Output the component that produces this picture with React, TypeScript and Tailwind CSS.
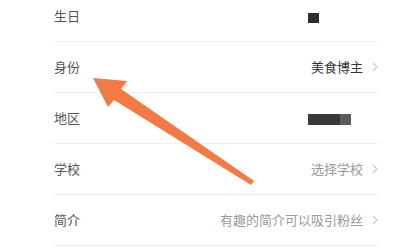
const rows = [
  { label: "生日", kind: "square" },
  { label: "身份", value: "美食博主", tone: "dark" },
  { label: "地区", kind: "bar" },
  { label: "学校", value: "选择学校", tone: "muted" },
  { label: "简介", value: "有趣的简介可以吸引粉丝", tone: "muted" },
];

function Chevron() {
  return (
    <svg width="6" height="10" viewBox="0 0 6 10" className="ml-[9px]">
      <path d="M1 1l4 4-4 4" fill="none" stroke="#c8c8c8" strokeWidth="1.1" />
    </svg>
  );
}

export default function App() {
  return (
    <div
      className="relative w-[417px] h-[248px] overflow-hidden bg-white"
      style={{ fontFamily: '"Noto Sans CJK SC", "Noto Sans", sans-serif' }}
    >
      {/* Profile rows */}
      <div className="ml-[54px] w-[324px] -mt-[9px]">
        {rows.map((r) => (
          <div
            key={r.label}
            className="h-[51px] flex items-center justify-between border-b border-[#efefef]"
          >
            <span className="text-[13px] text-[#555]">{r.label}</span>
            {r.kind === "square" && (
              <div className="mr-[59px] mt-[3px] w-[11px] h-[10px] bg-[#2e2e2e] blur-[0.4px]" />
            )}
            {r.kind === "bar" && (
              <div className="mr-[27px] mt-[2px] flex w-[43px] h-[11px] blur-[0.5px]">
                <div className="flex-1 bg-[#3a3a3a]" />
                <div className="w-[11px] bg-[#5c5c5c]" />
              </div>
            )}
            {r.value && (
              <div className="flex items-center">
                <span
                  className={
                    r.tone === "dark"
                      ? "text-[13px] text-[#333]"
                      : "text-[13px] text-[#9a9a9a]"
                  }
                >
                  {r.value}
                </span>
                <Chevron />
              </div>
            )}
          </div>
        ))}
      </div>

      {/* Annotation arrow */}
      <svg
        className="absolute inset-0 pointer-events-none"
        width="417"
        height="248"
        viewBox="0 0 417 248"
      >
        <polygon
          points="93,78 127,81 121,89 254,181 251,185 114,100 108,107"
          fill="#f47a45"
          strokeLinejoin="round"
        />
      </svg>
    </div>
  );
}
